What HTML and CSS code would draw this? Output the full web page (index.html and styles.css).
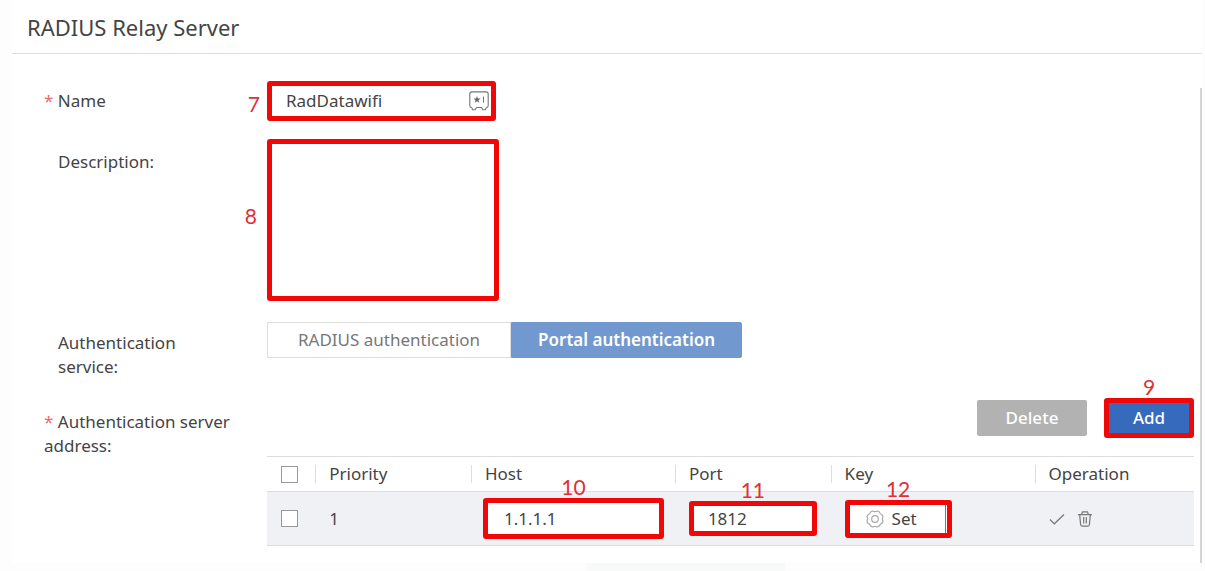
FILE: index.html
```html
<!DOCTYPE html>
<html lang="en">
<head>
<meta charset="utf-8">
<title>RADIUS Relay Server</title>
<link rel="stylesheet" href="styles.css">
</head>
<body>
<main class="dialog">
  <header class="dialog-header"><h1>RADIUS Relay Server</h1></header>
  <form class="form">
    <div class="row row-name">
      <label class="label required" for="name"><span class="star">*</span> Name</label>
      <div class="control">
        <div class="marked name-box">
          <span class="callout callout-left">7</span>
          <input id="name" type="text" value="RadDatawifi">
          <svg class="vault" viewBox="0 0 20 20" fill="none" stroke="#777" stroke-width="1.1" stroke-linejoin="round">
            <path d="M3 .9h14Q19.2.9 19.2 3v11.500q0 2-2 2.200l-.8 2h-2.600l-1.200-2.200H7.400l-1.200 2.200H3.600l-.8-2q-2-.2-2-2.200V3Q.8.900 3 .9z"/>
            <path d="M8 5l.9 2.500 2.700.1-2.100 1.600.8 2.600L8 10.300l-2.300 1.500.8-2.600-2.100-1.600 2.700-.1z" fill="#666" stroke="none"/>
            <path d="M14.500 5.500v6"/>
          </svg>
        </div>
      </div>
    </div>
    <div class="row row-description">
      <label class="label" for="description">Description:</label>
      <div class="control">
        <div class="marked description-box">
          <span class="callout callout-middle">8</span>
          <textarea id="description"></textarea>
        </div>
      </div>
    </div>
    <div class="row row-service">
      <span class="label" id="service-label">Authentication service:</span>
      <div class="control segmented" role="group" aria-labelledby="service-label">
        <button type="button" class="segment">RADIUS authentication</button>
        <button type="button" class="segment selected" aria-pressed="true">Portal authentication</button>
      </div>
    </div>
    <div class="row row-address">
      <span class="label required"><span class="star">*</span> Authentication server address:</span>
      <div class="control">
        <div class="toolbar">
          <button type="button" class="button delete">Delete</button>
          <div class="marked add-box">
            <span class="callout callout-top">9</span>
            <button type="button" class="button add">Add</button>
          </div>
        </div>
        <table class="servers">
          <colgroup><col class="col-check"><col class="col-priority"><col class="col-host"><col class="col-port"><col class="col-key"><col class="col-operation"></colgroup>
          <thead>
            <tr>
              <th><input type="checkbox" aria-label="Select all servers"></th>
              <th>Priority</th><th>Host</th><th>Port</th><th>Key</th><th>Operation</th>
            </tr>
          </thead>
          <tbody>
            <tr>
              <td><input type="checkbox" aria-label="Select server 1"></td>
              <td>1</td>
              <td class="field-cell"><div class="marked host-box"><span class="callout callout-top">10</span><input type="text" aria-label="Host" value="1.1.1.1"></div></td>
              <td class="field-cell"><div class="marked port-box"><span class="callout callout-top">11</span><input type="text" aria-label="Port" value="1812"></div></td>
              <td class="field-cell"><div class="marked key-box"><span class="callout callout-top">12</span>
                <button type="button" class="set">
                  <svg class="gear" viewBox="0 0 18 18" fill="none" stroke="#aaa" stroke-width="1.200" stroke-linejoin="round">
                    <path d="M6.500 1Q9 2.400 11.500 1L13.200 1.900Q14 4.200 16.200 4.900L17 6.600Q15.600 9 17 11.400L16.200 13.100Q14 13.800 13.200 16.100L11.500 17Q9 15.600 6.500 17L4.800 16.100Q4 13.800 1.800 13.100L1 11.400Q2.400 9 1 6.600L1.800 4.900Q4 4.200 4.800 1.900z"/>
                    <circle cx="9" cy="9" r="3.300"/>
                  </svg>Set</button>
              </div></td>
              <td>
                <div class="operations">
                  <button type="button" class="icon-button" aria-label="Confirm"><svg viewBox="0 0 16 16" fill="none" stroke="#777" stroke-width="1.200"><path d="M1 8.500l4.300 4.300L15 3.500"/></svg></button>
                  <button type="button" class="icon-button" aria-label="Delete server"><svg viewBox="0 0 16 16" fill="none" stroke="#777" stroke-width="1.200" stroke-linejoin="round"><path d="M1 3.700h14M4.700 3.500L5.400.8h5.200l.7 2.700M2.700 3.900l.9 9.600q.2 1.700 1.900 1.700h5q1.700 0 1.900-1.700l.9-9.600M6.700 6v6.500M9.300 6v6.500"/></svg></button>
                </div>
              </td>
            </tr>
          </tbody>
        </table>
      </div>
    </div>
  </form>
</main>
<div class="page-strip"></div>
</body>
</html>
```
FILE: styles.css
```css
* { box-sizing: border-box; }
body {
  margin: 0;
  background: #fdfdfd;
  color: #444;
  font: 17px/24px "Noto Sans", "Open Sans", sans-serif;
}
button, input, textarea { font: inherit; color: inherit; margin: 0; }
.dialog { position: relative; margin: 0 3px 0 12px; background: #fff; }
.dialog::after {
  content: "";
  position: absolute;
  top: 88px;
  right: 0;
  bottom: 0;
  border-right: 2px solid #d5d5d5;
}
.dialog-header { padding: 11px 15px 10px; border-bottom: 1px solid #ddd; }
.dialog-header h1 { margin: 0; font-size: 22px; line-height: 32px; font-weight: 400; color: #444; }
.form { padding: 27px 8px 17px 32px; }
.row { display: grid; grid-template-columns: 209px 1fr; column-gap: 14px; }
.row-name { margin-bottom: 18px; }
.row-description { margin-bottom: 21px; }
.row-service { margin-bottom: 19px; }
.label { padding: 9px 24px 0 14px; }
.label.required { padding: 8px 0 0; }
.row-description .label { padding-top: 11px; }
.row-address .label.required { padding-top: 12px; }
.star { color: #ee6a6d; }

.marked { position: relative; border: 5px solid #f00808; border-radius: 3px; background: #fff; }
.marked input, .marked textarea { display: block; width: 100%; border: 0; background: transparent; padding: 0 14px; outline: 0; }
.callout { position: absolute; color: #df3035; font: 21px/24px Lato, sans-serif; }
.callout-left { right: 100%; top: 6px; margin-right: 12px; }
.callout-middle { right: 100%; top: 60px; margin-right: 15px; }
.callout-top { left: 0; right: 0; bottom: 100%; margin-bottom: 4px; text-align: center; }
.name-box { display: flex; align-items: center; width: 229px; height: 40px; padding-right: 2px; }
.vault { flex: none; width: 20px; height: 20px; }
.description-box { width: 232px; height: 162px; }
.description-box textarea { height: 100%; resize: none; }

.segmented { display: flex; align-items: flex-start; }
.segment { height: 36px; padding: 0 30px; border: 1px solid #ddd; background: #fff; color: #777; white-space: nowrap; }
.segment.selected { padding: 0 26px; border-color: #7199cf; border-radius: 0 2px 2px 0; background: #7199cf; color: #fff; font-weight: 600; }

.toolbar { display: flex; justify-content: flex-end; align-items: center; gap: 17px; margin-bottom: 18px; }
.button { border: 0; color: #fff; font-weight: 500; }
.delete { width: 110px; height: 36px; border-radius: 2px; background: #b2b2b2; }
.add-box { width: 90px; height: 40px; }
.add { display: block; width: 100%; height: 100%; background: #356abd; }

.servers { width: 100%; table-layout: fixed; border-collapse: collapse; border-top: 1px solid #ddd; }
.col-check { width: 5.2%; }
.col-priority { width: 16.8%; }
.col-host { width: 22%; }
.col-port { width: 16.8%; }
.col-key { width: 22%; }
.servers th, .servers td { padding: 0 14px; text-align: left; font-weight: 400; border-bottom: 1px solid #ddd; }
.servers th { height: 35px; background: linear-gradient(#ddd, #ddd) left center / 1px 18px no-repeat; }
.servers th:first-child { background: none; }
.servers td { height: 54px; background: #f0f1f5; }
.servers .field-cell { padding: 0 12px; }
.servers input[type="checkbox"] { appearance: none; display: block; width: 17px; height: 17px; border: 1px solid #999; background: #fff; }
.host-box { width: 181px; height: 41px; }
.host-box input { height: 31px; padding-left: 16px; }
.port-box { width: 128px; height: 35px; margin-left: 2px; }
.port-box input { height: 25px; }
.key-box { width: 107px; height: 38px; margin-left: 2px; }
.set { display: flex; align-items: center; gap: 8px; width: 96px; height: 28px; padding: 0 0 0 16px; border: 0; border-right: 1px solid #777; background: #fff; }
.gear { width: 18px; height: 18px; }
.operations { display: flex; gap: 12px; }
.icon-button { display: flex; padding: 0; border: 0; background: none; }
.icon-button svg { width: 16px; height: 16px; }
.page-strip { width: 198px; height: 8px; margin-left: 587px; background: #f8f9f9; }
```
